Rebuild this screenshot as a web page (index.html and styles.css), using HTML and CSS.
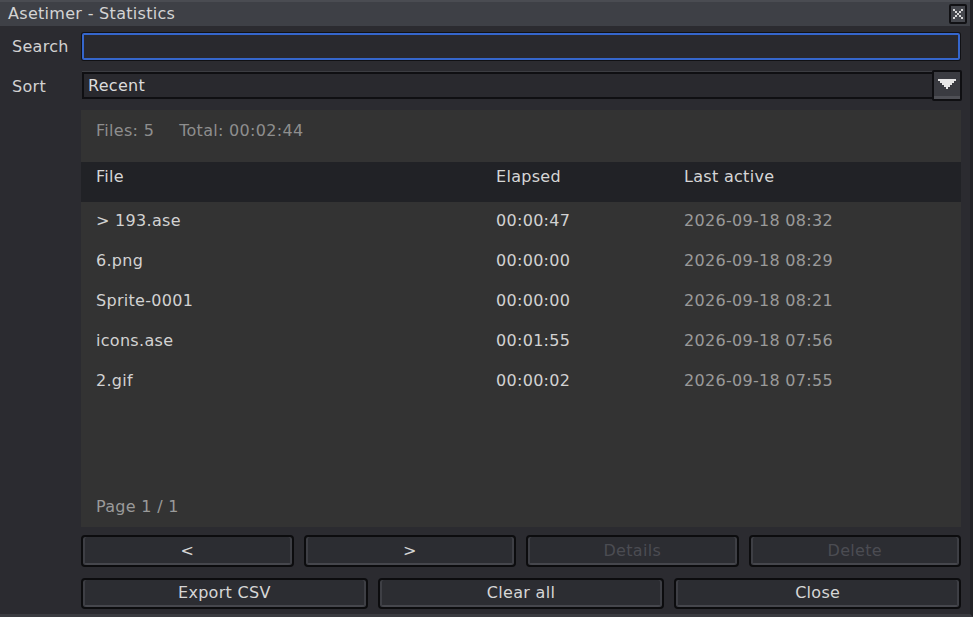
FILE: index.html
```html
<!DOCTYPE html>
<html>
<head>
<meta charset="utf-8">
<link rel="stylesheet" href="styles.css">
</head>
<body>
<div class="window">
  <div class="titlebar">
    <span class="title">Asetimer - Statistics</span>
    <span class="close">
      <svg width="12" height="12" viewBox="0 0 12 12"><path d="M1 1h2v2h2v2h2v-2h2v-2h2v2h-2v2h-2v2h2v2h2v2h-2v-2h-2v-2h-2v2h-2v2h-2v-2h2v-2h2v-2h-2v-2h-2z" fill="#d6d6d6"/></svg>
    </span>
  </div>
  <div class="content">
    <div class="field-row search-row">
      <span class="label">Search</span>
      <div class="input"></div>
    </div>
    <div class="field-row sort-row">
      <span class="label">Sort</span>
      <div class="combo">
        <div class="combo-value">Recent</div>
        <div class="combo-btn">
          <svg width="18" height="10" viewBox="0 0 18 10"><path d="M0 0h18v2h-2v2h-2v2h-2v2h-2v2h-2v-2h-2v-2h-2v-2h-2v-2h-2z" fill="#e6e6e6"/></svg>
        </div>
      </div>
    </div>
    <div class="body-col">
      <div class="panel">
        <div class="stats"><span>Files: 5</span><span class="total">Total: 00:02:44</span></div>
        <div class="row header">
          <span class="c-file">File</span><span class="c-el">Elapsed</span><span class="c-last">Last active</span>
        </div>
        <div class="row"><span class="c-file">&gt; 193.ase</span><span class="c-el">00:00:47</span><span class="c-last dim">2026-09-18 08:32</span></div>
        <div class="row"><span class="c-file">6.png</span><span class="c-el">00:00:00</span><span class="c-last dim">2026-09-18 08:29</span></div>
        <div class="row"><span class="c-file">Sprite-0001</span><span class="c-el">00:00:00</span><span class="c-last dim">2026-09-18 08:21</span></div>
        <div class="row"><span class="c-file">icons.ase</span><span class="c-el">00:01:55</span><span class="c-last dim">2026-09-18 07:56</span></div>
        <div class="row"><span class="c-file">2.gif</span><span class="c-el">00:00:02</span><span class="c-last dim">2026-09-18 07:55</span></div>
        <div class="spacer"></div>
        <div class="page">Page 1 / 1</div>
      </div>
      <div class="btn-row four">
        <div class="btn">&lt;</div>
        <div class="btn">&gt;</div>
        <div class="btn disabled">Details</div>
        <div class="btn disabled">Delete</div>
      </div>
      <div class="btn-row three">
        <div class="btn">Export CSV</div>
        <div class="btn">Clear all</div>
        <div class="btn">Close</div>
      </div>
    </div>
  </div>
</div>
</body>
</html>
```

FILE: styles.css
```css
html, body {
  margin: 0;
  padding: 0;
  background: #2b2b30;
}
body {
  font-family: "DejaVu Sans", sans-serif;
  font-size: 16px;
  letter-spacing: 0.3px;
  color: #d2d2d2;
  width: 973px;
  height: 617px;
  overflow: hidden;
}
.window {
  width: 973px;
  height: 617px;
  box-sizing: border-box;
  display: flex;
  flex-direction: column;
  border-right: 3px solid #222226;
  border-bottom: 3px solid #3a3b40;
  background: #2b2b30;
}
.titlebar {
  height: 26px;
  flex: none;
  background: #3e4046;
  border-top: 2px solid #4a4c52;
  box-sizing: border-box;
  display: flex;
  align-items: center;
  justify-content: space-between;
  padding-left: 8px;
  padding-right: 3px;
  color: #d4d4d4;
}
.title {
  line-height: 20px;
}
.close {
  width: 18px;
  height: 20px;
  box-sizing: border-box;
  background: #45474d;
  border: 2px solid #111114;
  border-radius: 2px;
  display: flex;
  align-items: center;
  justify-content: center;
}
.content {
  flex: 1;
  display: flex;
  flex-direction: column;
  padding: 7px 8px 0 12px;
}
.field-row {
  display: flex;
  align-items: center;
}
.label {
  width: 70px;
  flex: none;
}
.search-row {
  height: 27px;
}
.input {
  flex: 1;
  height: 27px;
  box-sizing: border-box;
  background: #29292e;
  border: 2px solid #3566cc;
  border-radius: 2px;
  box-shadow: 0 0 0 1px #111114;
  margin-right: 2px;
}
.sort-row {
  margin-top: 10px;
  height: 31px;
}
.sort-row .label {
  padding-top: 2px;
}
.combo {
  flex: 1;
  display: flex;
  align-items: center;
}
.combo-value {
  flex: 1;
  height: 27px;
  box-sizing: border-box;
  background: #29292e;
  border: 2px solid #0f0f12;
  border-right: none;
  box-shadow: 0 -1px 0 #3c3d42;
  padding-left: 4px;
  line-height: 24px;
  color: #dcdcdc;
}
.combo-btn {
  width: 30px;
  height: 31px;
  box-sizing: border-box;
  background: #3a3b41;
  border: 2px solid #0f0f12;
  border-radius: 2px;
  box-shadow: inset 0 -3px 0 #4f5056;
  display: flex;
  align-items: center;
  justify-content: center;
  padding-bottom: 3px;
}
.body-col {
  margin-left: 69px;
  display: flex;
  flex-direction: column;
}
.panel {
  margin-top: 9px;
  margin-right: 1px;
  height: 417px;
  flex: none;
  background: #333333;
  display: flex;
  flex-direction: column;
}
.stats {
  height: 52px;
  flex: none;
  box-sizing: border-box;
  padding-left: 15px;
  padding-top: 11px;
  color: #8e8e8e;
}
.total {
  margin-left: 25px;
}
.row {
  height: 40px;
  flex: none;
  display: flex;
  align-items: center;
  padding-left: 15px;
  box-sizing: border-box;
  padding-bottom: 3px;
}
.row.header {
  background: #212226;
  padding-bottom: 12px;
  color: #d6d6d6;
}
.c-file {
  width: 400px;
}
.c-el {
  width: 188px;
}
.dim {
  color: #9a9a9a;
}
.spacer {
  flex: 1;
}
.page {
  height: 30px;
  flex: none;
  padding-left: 15px;
  color: #9a9a9a;
  box-sizing: border-box;
}
.btn-row {
  display: flex;
  gap: 10px;
  margin-left: 0;
  margin-right: 1px;
}
.btn-row.four {
  margin-top: 8px;
  height: 32px;
}
.btn-row.three {
  margin-top: 11px;
  height: 31px;
}
.btn {
  flex: 1;
  box-sizing: border-box;
  background: #2c2d32;
  border: 2px solid #0c0c0e;
  border-radius: 4px;
  box-shadow: inset 2px 0 0 #3e3f45, inset -2px 0 0 #3e3f45, inset 0 -2px 0 #46474d;
  display: flex;
  align-items: center;
  justify-content: center;
  color: #d6d6d6;
  padding-bottom: 2px;
}
.btn.disabled {
  color: #4b4c52;
}
```
